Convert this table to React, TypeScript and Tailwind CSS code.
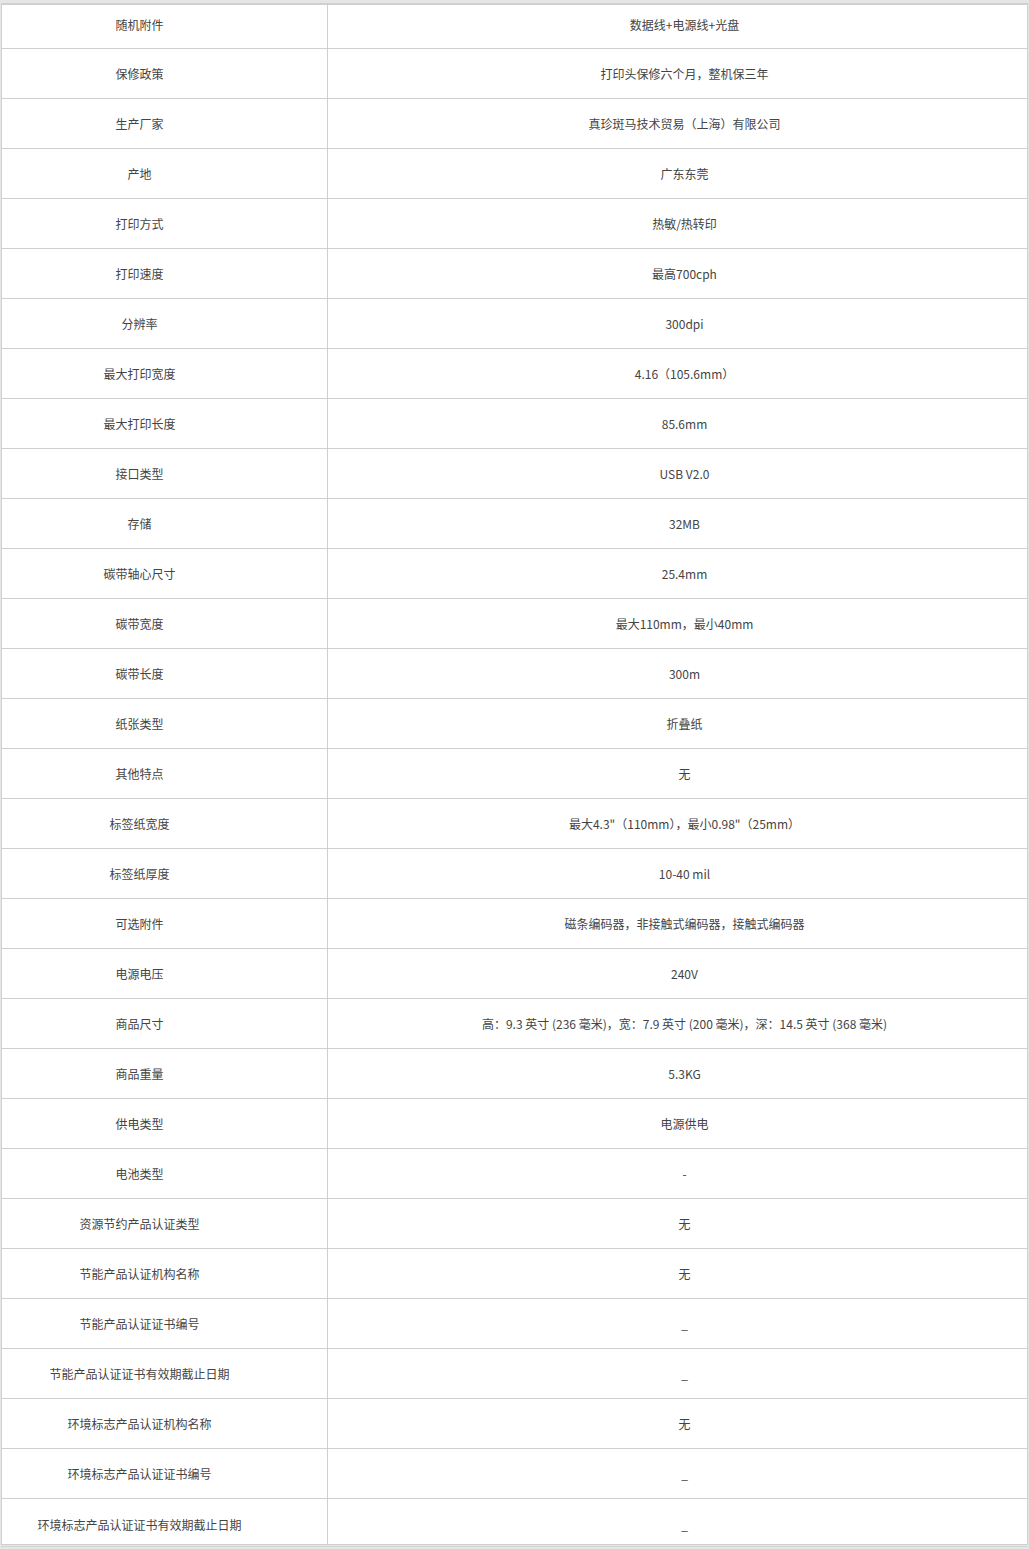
import React from "react";

// 规格参数表
const SPECS: [string, string][] = [
  ["随机附件", "数据线+电源线+光盘"],
  ["保修政策", "打印头保修六个月，整机保三年"],
  ["生产厂家", "真珍斑马技术贸易（上海）有限公司"],
  ["产地", "广东东莞"],
  ["打印方式", "热敏/热转印"],
  ["打印速度", "最高700cph"],
  ["分辨率", "300dpi"],
  ["最大打印宽度", "4.16（105.6mm）"],
  ["最大打印长度", "85.6mm"],
  ["接口类型", "USB V2.0"],
  ["存储", "32MB"],
  ["碳带轴心尺寸", "25.4mm"],
  ["碳带宽度", "最大110mm，最小40mm"],
  ["碳带长度", "300m"],
  ["纸张类型", "折叠纸"],
  ["其他特点", "无"],
  ["标签纸宽度", "最大4.3\"（110mm），最小0.98\"（25mm）"],
  ["标签纸厚度", "10-40 mil"],
  ["可选附件", "磁条编码器，非接触式编码器，接触式编码器"],
  ["电源电压", "240V"],
  ["商品尺寸", "高：9.3 英寸 (236 毫米)，宽：7.9 英寸 (200 毫米)，深：14.5 英寸 (368 毫米)"],
  ["商品重量", "5.3KG"],
  ["供电类型", "电源供电"],
  ["电池类型", "-"],
  ["资源节约产品认证类型", "无"],
  ["节能产品认证机构名称", "无"],
  ["节能产品认证证书编号", "_"],
  ["节能产品认证证书有效期截止日期", "_"],
  ["环境标志产品认证机构名称", "无"],
  ["环境标志产品认证证书编号", "_"],
  ["环境标志产品认证证书有效期截止日期", "_"],
];

function Row({ label, value, idx }: { label: string; value: string; idx: number }) {
  const first = idx === 0;
  const last = idx === SPECS.length - 1;
  const h = first ? "h-[44px]" : last ? "h-[45px]" : "h-[50px]";
  const pad = first ? "pb-[4px]" : last ? "pt-[6px]" : "";
  return (
    <div className={`flex ${h} ${last ? "" : "border-b border-[#cfcfcf]"}`}>
      <div
        className={`w-[326px] shrink-0 border-r border-[#cfcfcf] flex items-center justify-center pr-[50px] ${pad}`}
      >
        {label}
      </div>
      <div className={`flex-1 flex items-center justify-center pl-[14px] ${pad}`}>{value}</div>
    </div>
  );
}

export default function App() {
  return (
    <div
      className="w-[1029px] h-[1549px] bg-white text-[12px] text-[#444] leading-none"
      style={{ fontFamily: '"Microsoft YaHei", "Noto Sans CJK SC", sans-serif' }}
    >
      <div className="bg-[#e6e6e6] pt-[3px] px-[1px] pb-[2px]">
        <div className="bg-white border-t-2 border-x border-b border-[#cfcfcf]">
          {SPECS.map(([k, v], i) => (
            <Row key={k} label={k} value={v} idx={i} />
          ))}
        </div>
        <div className="h-px bg-[#e6e6e6]" />
        <div className="h-px bg-[#d4d4d4]" />
      </div>
    </div>
  );
}
